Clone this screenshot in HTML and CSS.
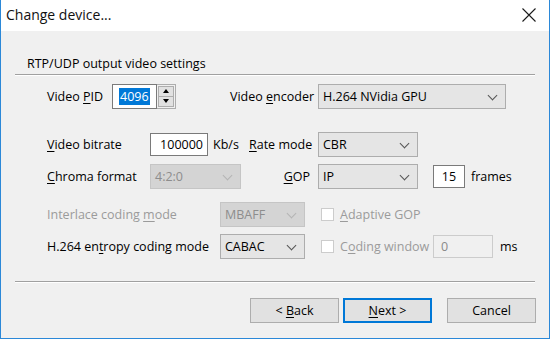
FILE: index.html
```html
<!DOCTYPE html>
<html lang="en">
<head>
  <meta charset="UTF-8" />
  <title>Change device...</title>
  <link rel="stylesheet" href="styles.css">
</head>
<body>
  <div class="window">
    <!-- Title bar -->
    <div class="titlebar">
      <span class="title">Change device...</span>
      <svg class="close" width="14" height="14" viewBox="0 0 14 14">
        <path d="M0.5 0.5 L13.5 13.5 M13.5 0.5 L0.5 13.5" stroke="#1a1a1a" stroke-width="1.1" fill="none" />
      </svg>
    </div>

    <div class="content">
      <div class="group-title">RTP/UDP output video settings</div>
      <div class="etched"></div>

      <!-- Row 1 -->
      <div class="row row-1">
        <span class="label w-pid">Video <u>P</u>ID</span>
        <div class="spin">
          <div class="edit spin-edit"><span class="selected">4096</span></div>
          <div class="spin-buttons">
            <div class="spin-btn"><span class="tri-up"></span></div>
            <div class="spin-btn"><span class="tri-down"></span></div>
          </div>
        </div>
        <span class="label w-encoder">Video <u>e</u>ncoder</span>
        <div class="combo w-188">H.264 NVidia GPU<span class="chev"></span></div>
      </div>

      <!-- Row 2 -->
      <div class="row row-2">
        <span class="label w-103"><u>V</u>ideo bitrate</span>
        <div class="edit w-58 right">100000</div>
        <span class="label w-kbs">Kb/s</span>
        <span class="label w-69"><u>R</u>ate mode</span>
        <div class="combo w-100">CBR<span class="chev"></span></div>
      </div>

      <!-- Row 3 -->
      <div class="row row-3">
        <span class="label w-103"><u>C</u>hroma format</span>
        <div class="combo disabled w-91">4:2:0<span class="chev"></span></div>
        <span class="label w-gop"><u>G</u>OP</span>
        <div class="combo w-100">IP<span class="chev"></span></div>
        <div class="edit w-32 center gop-len">15</div>
        <span class="label unit">frames</span>
      </div>

      <!-- Row 4 -->
      <div class="row row-4">
        <span class="label w-173 grey">Interlace coding <u>m</u>ode</span>
        <div class="combo disabled w-85">MBAFF<span class="chev"></span></div>
        <span class="check"></span>
        <span class="label grey"><u>A</u>daptive GOP</span>
      </div>

      <!-- Row 5 -->
      <div class="row row-5">
        <span class="label w-173">H.264 en<u>t</u>ropy coding mode</span>
        <div class="combo w-85">CABAC<span class="chev"></span></div>
        <span class="check"></span>
        <span class="label grey w-93">C<u>o</u>ding window</span>
        <div class="edit disabled w-60">0</div>
        <span class="label unit-ms">ms</span>
      </div>

      <div class="etched footer-line"></div>

      <div class="buttons">
        <button class="btn">&lt; <u>B</u>ack</button>
        <button class="btn default"><u>N</u>ext &gt;</button>
        <button class="btn cancel">Cancel</button>
      </div>
    </div>
  </div>
</body>
</html>
```

FILE: styles.css
```css
* {
  box-sizing: border-box;
}

body {
  margin: 0;
  font-family: 'Open Sans', 'Noto Sans', sans-serif;
  font-size: 12.5px;
  color: #000;
  background: #f0f0f0;
}

u {
  text-decoration: underline;
  text-underline-offset: 2px;
}

.window {
  width: 550px;
  height: 339px;
  border: 1px solid #2b88d8;
  border-top: none;
  background: #f0f0f0;
}

.titlebar {
  height: 31px;
  background: #fff;
  display: flex;
  align-items: center;
  justify-content: space-between;
  padding: 0 13px 2px 5px;
}

.title {
  font-size: 14px;
  color: #111;
}

.close {
  display: block;
  margin-top: 1px;
}

.group-title {
  margin: 24px 0 0 26px;
  height: 18px;
  line-height: 18px;
}

.etched {
  margin: 1px 14px 0 14px;
  height: 2px;
  border-top: 1px solid #a0a0a0;
  border-bottom: 1px solid #fff;
}

.row {
  display: flex;
  align-items: center;
  height: 32px;
  padding-left: 46px;
}

.row-1 { margin-top: 4px; }
.row-2 { margin-top: 16px; }
.row-4 { margin-top: 6px; }

.label {
  white-space: nowrap;
  flex-shrink: 0;
}

.grey {
  color: #9b9b9b;
}

.w-pid { width: 65px; }
.w-encoder { width: 88px; margin-left: 54px; }
.w-103 { width: 103px; }
.w-kbs { width: 36px; margin-left: 5px; }
.w-69 { width: 69px; }
.w-gop { width: 77px; text-align: right; padding-right: 8px; }
.w-173 { width: 173px; }
.w-93 { width: 93px; }

.w-188 { width: 188px; }
.w-100 { width: 100px; }
.w-91 { width: 91px; }
.w-85 { width: 85px; }
.w-58 { width: 58px; }
.w-32 { width: 32px; }
.w-60 { width: 60px; }

.edit {
  height: 23px;
  background: #fff;
  border: 1px solid #7a7a7a;
  padding: 0 4px;
  display: flex;
  align-items: center;
}

.edit.right { justify-content: flex-end; }
.edit.center { justify-content: center; }

.edit.disabled {
  background: #f0f0f0;
  border-color: #cccccc;
  color: #8a8a8a;
  padding-left: 7px;
}

.gop-len { margin-left: 15px; }
.unit { margin-left: 6px; }
.unit-ms { margin-left: 7px; }

.spin {
  display: flex;
  height: 25px;
}

.spin-edit {
  width: 45px;
  height: 25px;
  padding-left: 6px;
}

.selected {
  background: #0078d7;
  color: #fff;
  line-height: 17px;
  padding: 0 1px;
}

.spin-buttons {
  width: 19px;
  height: 25px;
  border: 1px solid #adadad;
  border-left: none;
  display: flex;
  flex-direction: column;
  padding: 1px;
  background: #f0f0f0;
}

.spin-btn {
  flex: 1;
  background: #e1e1e1;
  border: 1px solid #adadad;
  display: flex;
  align-items: center;
  justify-content: center;
}

.spin-btn + .spin-btn {
  border-top: none;
}

.tri-up,
.tri-down {
  width: 0;
  height: 0;
  border-left: 3.5px solid transparent;
  border-right: 3.5px solid transparent;
}

.tri-up { border-bottom: 4px solid #000; }
.tri-down { border-top: 4px solid #000; }

.combo {
  position: relative;
  height: 25px;
  background: #e5e5e5;
  border: 1px solid #adadad;
  padding: 0 4px;
  display: flex;
  align-items: center;
  flex-shrink: 0;
}

.combo.disabled {
  background: #d4d4d4;
  border-color: #c5c5c5;
  color: #8d8d8d;
}

.chev {
  position: absolute;
  right: 9px;
  top: 7px;
  width: 7px;
  height: 7px;
  border-right: 1px solid #555;
  border-bottom: 1px solid #555;
  transform: rotate(45deg);
}

.combo.disabled .chev {
  border-color: #b4b4b4;
}

.check {
  width: 13px;
  height: 13px;
  margin-left: 16px;
  margin-right: 6px;
  background: #fff;
  border: 1px solid #cccccc;
  flex-shrink: 0;
}

.footer-line {
  margin-top: 19px;
}

.buttons {
  display: flex;
  justify-content: flex-end;
  padding-right: 13px;
  margin-top: 15px;
}

.btn {
  width: 89px;
  height: 25px;
  font-family: inherit;
  font-size: inherit;
  color: #000;
  background: #e1e1e1;
  border: 1px solid #adadad;
  padding: 0;
  margin-left: 4px;
}

.btn.default {
  border: 2px solid #0078d7;
}

.btn.cancel {
  margin-left: 15px;
}
```
